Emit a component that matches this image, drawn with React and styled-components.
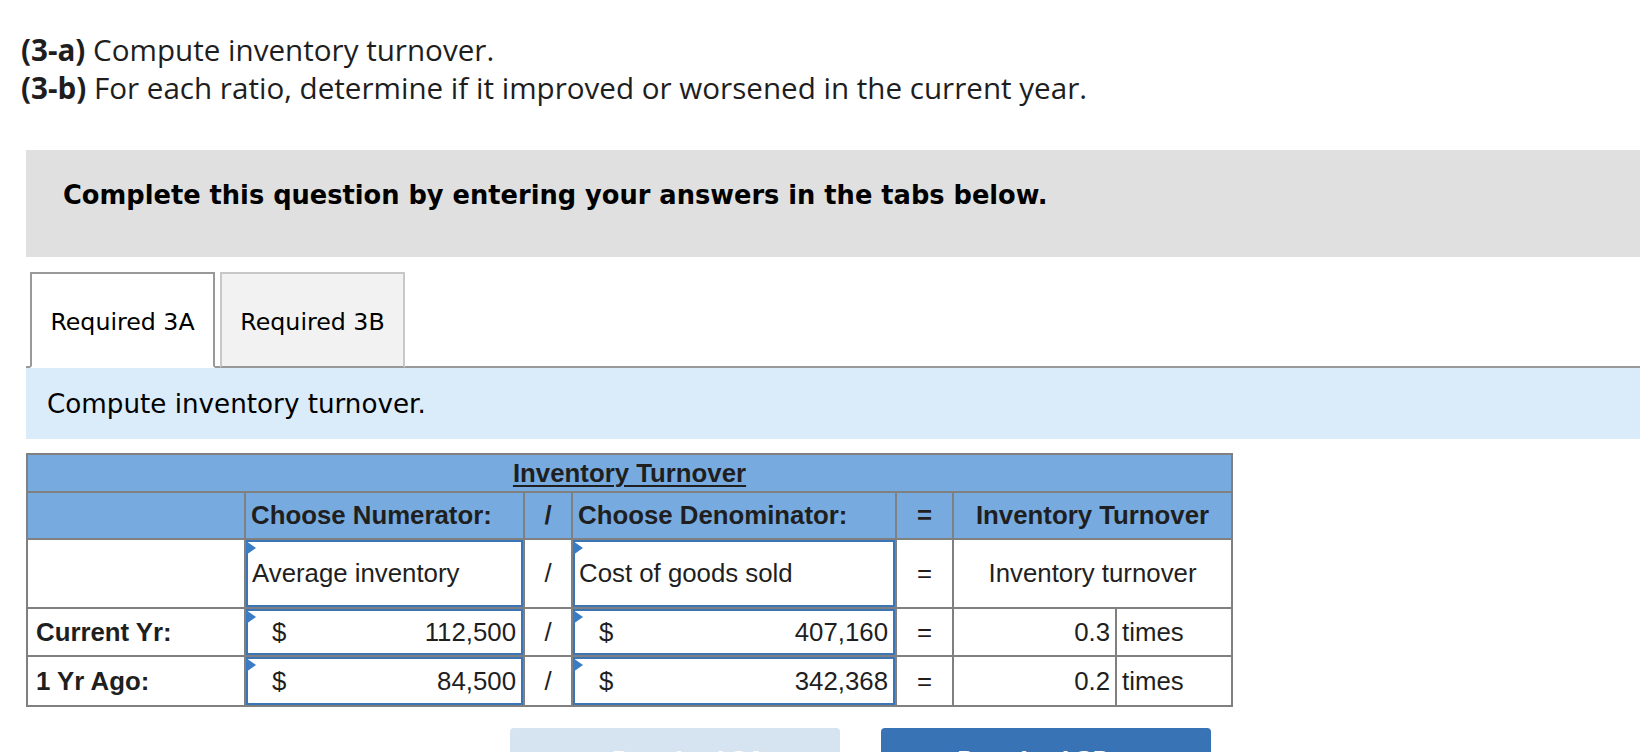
import React from "react";
import styled, { createGlobalStyle } from "styled-components";

const GlobalStyle = createGlobalStyle`
  html, body { margin: 0; padding: 0; background: #ffffff; }
  body { overflow: hidden; }
`;

const Page = styled.div`
  width: 1640px;
  height: 752px;
  overflow: hidden;
  box-sizing: border-box;
  padding-top: 31px;
`;

const Heading = styled.div`
  padding-left: 21px;
  font-family: "Open Sans", "Liberation Sans", sans-serif;
  font-size: 29.6px;
  line-height: 38px;
  color: #1e1e1e;
`;

const Strong = styled.span`
  font-weight: 700;
`;

const Banner = styled.div`
  margin: 43px 0 0 26px;
  height: 107px;
  box-sizing: border-box;
  padding: 28px 0 0 37px;
  background: #e0e0e0;
  font-family: "DejaVu Sans", Verdana, sans-serif;
  font-weight: 700;
  font-size: 25.7px;
  line-height: 34px;
  color: #000;
`;

const TabBar = styled.div`
  margin: 15px 0 0 26px;
  display: flex;
  gap: 5px;
  padding-left: 4px;
  border-bottom: 2px solid #999999;
`;

const Tab = styled.div`
  width: 185px;
  height: 96px;
  box-sizing: border-box;
  margin-bottom: -2px;
  display: flex;
  align-items: center;
  justify-content: center;
  padding-top: 3px;
  border: 2px solid ${(p) => (p.$active ? "#999999" : "#c8c8c8")};
  border-bottom: 2px solid ${(p) => (p.$active ? "#ffffff" : "#999999")};
  background: ${(p) => (p.$active ? "#ffffff" : "#f2f2f2")};
  font-family: "DejaVu Sans", Verdana, sans-serif;
  font-size: 23.7px;
  color: #000;
`;

const Instruction = styled.div`
  margin-left: 26px;
  height: 71px;
  padding-left: 21px;
  display: flex;
  align-items: center;
  background: #daebf9;
  font-family: "DejaVu Sans", Verdana, sans-serif;
  font-size: 26.2px;
  color: #000;
`;

const Table = styled.table`
  margin: 14px 0 0 26px;
  width: 1205px;
  table-layout: fixed;
  border-collapse: collapse;
  font-family: "Liberation Sans", Arial, sans-serif;
  font-size: 25.8px;
  color: #1f1f1f;
`;

const Cell = styled.td`
  border: 2px solid #808080;
  padding: 0 ${(p) => p.$pad ?? 5}px;
  height: ${(p) => p.$h}px;
  background: ${(p) => (p.$head ? "#77abe0" : "#ffffff")};
  font-weight: ${(p) => (p.$bold ? 700 : 400)};
  text-align: ${(p) => p.$align || "left"};
  vertical-align: middle;
  white-space: nowrap;
`;

const Title = styled.span`
  font-weight: 700;
  text-decoration: underline;
  text-underline-offset: 3px;
  text-decoration-thickness: 2px;
`;

const InputBox = styled.div`
  position: relative;
  box-sizing: border-box;
  height: ${(p) => p.$h}px;
  border: 2px solid #3a75b8;
  display: flex;
  align-items: center;
  justify-content: ${(p) => (p.$money ? "space-between" : "flex-start")};
  padding: ${(p) => (p.$money ? "0 5px 0 24px" : "0 0 0 4px")};
  background: #ffffff;

  &::before {
    content: "";
    position: absolute;
    left: -2px;
    top: -1px;
    width: 0;
    height: 0;
    border-left: 10px solid #3a7bc6;
    border-top: 7px solid transparent;
    border-bottom: 7px solid transparent;
  }
`;

const Buttons = styled.div`
  margin: 21px 0 0 510px;
  display: flex;
  gap: 41px;
`;

const NavButton = styled.div`
  width: 330px;
  height: 50px;
  box-sizing: border-box;
  border-radius: 4px;
  padding-top: 19px;
  text-align: center;
  background: ${(p) => (p.$primary ? "#3873b6" : "#d6e3f1")};
  color: #ffffff;
  font-family: "DejaVu Sans", Verdana, sans-serif;
  font-weight: 700;
  font-size: 22px;
`;

const rows = [
  { label: "Current Yr:", num: "112,500", den: "407,160", result: "0.3", h: 46 },
  { label: "1 Yr Ago:", num: "84,500", den: "342,368", result: "0.2", h: 48 },
];

export default function App() {
  return (
    <Page>
      <GlobalStyle />
      <Heading>
        <div>
          <Strong>(3-a)</Strong> Compute inventory turnover.
        </div>
        <div>
          <Strong>(3-b)</Strong> For each ratio, determine if it improved or worsened in the current year.
        </div>
      </Heading>

      <Banner>Complete this question by entering your answers in the tabs below.</Banner>

      <TabBar>
        <Tab $active>Required 3A</Tab>
        <Tab>Required 3B</Tab>
      </TabBar>

      <Instruction>Compute inventory turnover.</Instruction>

      <Table>
        <colgroup>
          <col style={{ width: 218 }} />
          <col style={{ width: 279 }} />
          <col style={{ width: 48 }} />
          <col style={{ width: 324 }} />
          <col style={{ width: 57 }} />
          <col style={{ width: 163 }} />
          <col style={{ width: 116 }} />
        </colgroup>
        <tbody>
          <tr>
            <Cell $head $h={36} colSpan={7} $align="center">
              <Title>Inventory Turnover</Title>
            </Cell>
          </tr>
          <tr>
            <Cell $head $h={45} />
            <Cell $head $h={45} $bold>Choose Numerator:</Cell>
            <Cell $head $h={45} $bold $align="center">/</Cell>
            <Cell $head $h={45} $bold>Choose Denominator:</Cell>
            <Cell $head $h={45} $bold $align="center">=</Cell>
            <Cell $head $h={45} $bold $align="center" colSpan={2}>Inventory Turnover</Cell>
          </tr>
          <tr>
            <Cell $h={67} />
            <Cell $h={67} $pad={0}>
              <InputBox $h={67}>Average inventory</InputBox>
            </Cell>
            <Cell $h={67} $align="center">/</Cell>
            <Cell $h={67} $pad={0}>
              <InputBox $h={67}>Cost of goods sold</InputBox>
            </Cell>
            <Cell $h={67} $align="center">=</Cell>
            <Cell $h={67} $align="center" colSpan={2}>Inventory turnover</Cell>
          </tr>
          {rows.map((r) => (
            <tr key={r.label}>
              <Cell $h={r.h} $bold $pad={8}>{r.label}</Cell>
              <Cell $h={r.h} $pad={0}>
                <InputBox $h={r.h} $money>
                  <span>$</span>
                  <span>{r.num}</span>
                </InputBox>
              </Cell>
              <Cell $h={r.h} $align="center">/</Cell>
              <Cell $h={r.h} $pad={0}>
                <InputBox $h={r.h} $money>
                  <span>$</span>
                  <span>{r.den}</span>
                </InputBox>
              </Cell>
              <Cell $h={r.h} $align="center">=</Cell>
              <Cell $h={r.h} $align="right">{r.result}</Cell>
              <Cell $h={r.h}>times</Cell>
            </tr>
          ))}
        </tbody>
      </Table>

      <Buttons>
        <NavButton>&lt; Required 3A</NavButton>
        <NavButton $primary>Required 3B &gt;</NavButton>
      </Buttons>
    </Page>
  );
}
